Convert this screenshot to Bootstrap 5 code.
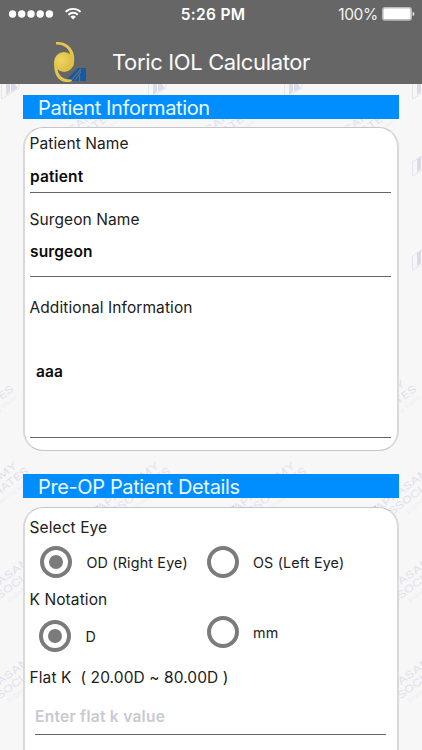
<!DOCTYPE html>
<html lang="en">
<head>
<meta charset="utf-8">
<meta name="viewport" content="width=device-width, initial-scale=1">
<title>Toric IOL Calculator</title>
<link href="https://cdn.jsdelivr.net/npm/bootstrap@5.3.0/dist/css/bootstrap.min.css" rel="stylesheet">
<style>
body{font-family:Inter,"Liberation Sans",sans-serif;background:#f7f7f8;color:#1c1c1c;height:750px;overflow:hidden}
.app-head{background:#666;height:84px;color:#fff}
.status-row{height:28px;padding:0 7px 0 9px}
.status-row>*{flex:1 1 0}
.clock{font-size:15.5px;font-weight:600;letter-spacing:.3px;padding:1px 0 0 2px}
.pct{font-size:15.5px;letter-spacing:-.3px;color:#f4f4f4;padding-top:1px}
.title-row{height:56px;padding-left:52px}
.lens-logo{margin-top:13px}
.app-title{font-size:22px;letter-spacing:-.36px;line-height:28px;margin:20px 0 0 22px;font-weight:400;color:#fafafa}
.watermark{top:84px;left:0;z-index:-1}
.screen{padding:11px 23px 0}
.bar-title{background:#008eff;color:#eaf8ff;height:24px;line-height:26px;font-size:20px;letter-spacing:-.37px;font-weight:400;padding-left:15px;margin:0}
.panel{background:#fff;border:1px solid #c6c6c8;border-left:2px solid #d9d9db;border-right:2px solid #d9d9db;border-radius:20px;padding:0 6px 0 5px}
.panel-a{margin-top:8px;height:324px;padding-top:2px}
.panel-b{margin-top:9px;height:243px;border-bottom:0;border-radius:20px 20px 0 0;padding-top:9px}
.gap-bar{margin-top:23px}
.lbl{font-size:15.5px;line-height:20px;letter-spacing:.09px;display:block;color:#202020;margin-left:-.5px}
.panel-b .lbl{line-height:21px;height:20px}
.field{border-bottom:1.5px solid #666;font-size:15.5px;line-height:20px;letter-spacing:.14px;font-weight:600;color:#0c0c0c}
.opt{font-size:14.3px;line-height:20px;letter-spacing:.18px;color:#202020;margin-left:14.5px;padding-top:1px}
.ring{width:32px;height:32px;border:4px solid #7b7b7b;border-radius:50%;flex:none}
.ring.on::after{content:"";width:14px;height:14px;border-radius:50%;background:#7b7b7b}
.choices{padding-right:8px}
.eye-row{margin:9px 0 11px}
.eye-row .opt-a{padding-left:10px}
.k-row{margin:7px 0 15px;height:36px}
.k-row .opt-a{padding:4px 0 0 9px}
.f1{height:39px;padding-top:13px}
.f2{height:47px;padding-top:12px}
.f3{height:120px;padding:44px 0 0 6px}
.lbl-next{margin-top:17px}
.f4{height:48px;padding-top:20px;margin:0 5px;letter-spacing:.28px;color:#c9c9d0}
</style>
<script src="https://cdn.jsdelivr.net/npm/bootstrap@5.3.0/dist/js/bootstrap.bundle.min.js"></script>
</head>
<body>
<svg class="watermark position-absolute" width="422" height="666" viewBox="0 84 422 666" aria-hidden="true">
  <defs>
    <g id="wm" fill="#e1e1ea" font-family="Inter,sans-serif">
      <g transform="rotate(-37)">
        <text x="-75" y="0" font-size="10" textLength="75" lengthAdjust="spacingAndGlyphs">APPASAMY</text>
        <text x="-75" y="11" font-size="10" textLength="81" lengthAdjust="spacingAndGlyphs">ASSOCIATES</text>
        <text x="-52" y="19" font-size="5.500" textLength="56" fill="#ebebef">Engineering Vision</text>
      </g>
      <path fill="#cdcddb" d="M-70 43l8-5v9h-11z"/>
    </g>
    <g id="wl"><path d="M.5 25V11L18 0V14z" fill="none" stroke="#e4e4ec"/><path d="M5 8L9 5V18L5 21z M10 5L17 14L10 18z" fill="#dbdbe6"/></g>
  </defs>
  <use href="#wm" x="18" y="467"/><use href="#wm" x="160" y="467"/><use href="#wm" x="296" y="467"/><use href="#wm" x="438" y="467"/>
  <use href="#wm" x="3" y="385"/><use href="#wm" x="406" y="385"/>
  <use href="#wm" x="39" y="556"/><use href="#wm" x="440" y="556"/>
  <use href="#wm" x="39" y="656"/><use href="#wm" x="440" y="656"/>
  <use href="#wm" x="103" y="110"/><use href="#wm" x="240" y="110"/><use href="#wm" x="379" y="110"/>
  <use href="#wl" x="1" y="74"/><use href="#wl" x="148" y="74"/><use href="#wl" x="284" y="74"/><use href="#wl" x="412" y="74"/>
  <use href="#wl" x="412" y="151"/><use href="#wl" x="412" y="245"/>
</svg>

<header class="app-head">
  <div class="status-row d-flex align-items-center">
    <div class="d-flex align-items-center">
      <svg width="74" height="16" viewBox="0 0 74 16" fill="#fff">
        <circle cx="3.5" cy="8" r="3.7"/><circle cx="12.7" cy="8" r="3.7"/><circle cx="22" cy="8" r="3.7"/><circle cx="31.2" cy="8" r="3.7"/><circle cx="40.4" cy="8" r="3.7"/>
        <g fill="none" stroke="#fff" stroke-width="1.9"><path d="M56.6 5.9a10.8 10.8 0 0 1 15 0"/><path d="M59.4 8.7a6.7 6.7 0 0 1 9.4 0"/></g>
        <path d="M61.3 10.8a4 4 0 0 1 5.600 0L64.1 13.600z"/>
      </svg>
    </div>
    <div class="clock text-center">5:26 PM</div>
    <div class="d-flex align-items-center justify-content-end gap-1">
      <span class="pct">100%</span>
      <svg width="33" height="14" viewBox="0 0 33 14"><rect x=".6" y=".6" width="28.800" height="12.600" rx="2.500" fill="none" stroke="#bdbdbd" stroke-width="1.100"/><rect x="1.300" y="1.300" width="27.400" height="11.200" rx="1.600" fill="#fff"/><path d="M30.600 4.800q1.900.6 1.900 2.200t-1.900 2.200z" fill="#ddd"/></svg>
    </div>
  </div>
  <div class="title-row d-flex align-items-start">
    <svg class="lens-logo" width="38" height="43" viewBox="0 0 38 43">
      <defs><radialGradient id="lens" cx=".35" cy=".4"><stop offset="0" stop-color="#efd766"/><stop offset="1" stop-color="#dfc044"/></radialGradient></defs>
      <path d="M26 27H34V40H13z" fill="#1558a4"/>
      <path d="M19 39.500L29 28M23 39.500l6-9M27.500 40V34" stroke="#666e78" stroke-width="1.200" fill="none"/>
      <path d="M4 1C13 0 21 6 22 15C22.500 19 22 22 21 25L18.500 15C18 9 13 3 4 3.500z" fill="#e4c84e"/>
      <path d="M2.500 19C1 29 4 40 14 41C17 41.200 19 41 20 40L19 38.500C11 39 6 34 5.500 28z" fill="#e4c84e"/>
      <circle cx="12" cy="21" r="10" fill="url(#lens)"/>
    </svg>
    <h1 class="app-title">Toric IOL Calculator</h1>
  </div>
</header>

<main class="screen">
  <h2 class="bar-title">Patient Information</h2>
  <section class="panel panel-a">
    <label class="lbl pt-1">Patient Name</label>
    <div class="field f1">patient</div>
    <label class="lbl lbl-next">Surgeon Name</label>
    <div class="field f2">surgeon</div>
    <label class="lbl lbl-next pt-1">Additional Information</label>
    <div class="field f3">aaa</div>
  </section>

  <h2 class="bar-title gap-bar">Pre-OP Patient Details</h2>
  <section class="panel panel-b">
    <span class="lbl">Select Eye</span>
    <div class="row g-0 choices eye-row">
      <div class="col-6 d-flex align-items-center opt-a"><span class="ring on d-flex align-items-center justify-content-center"></span><span class="opt">OD (Right Eye)</span></div>
      <div class="col-6 d-flex align-items-center"><span class="ring"></span><span class="opt">OS (Left Eye)</span></div>
    </div>
    <span class="lbl">K Notation</span>
    <div class="row g-0 choices k-row align-items-start">
      <div class="col-6 d-flex align-items-center opt-a"><span class="ring on d-flex align-items-center justify-content-center"></span><span class="opt">D</span></div>
      <div class="col-6 d-flex align-items-center"><span class="ring"></span><span class="opt">mm</span></div>
    </div>
    <span class="lbl">Flat K&nbsp; ( 20.00D ~ 80.00D )</span>
    <div class="field f4">Enter flat k value</div>
  </section>
</main>
</body>
</html>
